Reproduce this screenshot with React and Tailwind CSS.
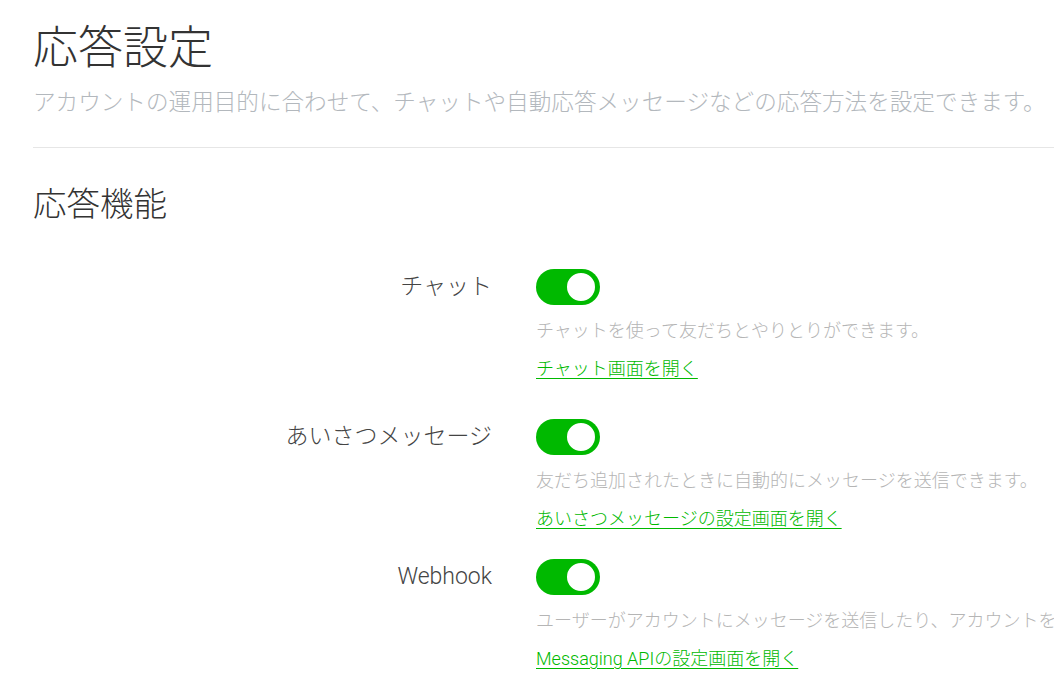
const rows = [
  {
    label: "チャット",
    desc: "チャットを使って友だちとやりとりができます。",
    link: "チャット画面を開く",
    gap: "mt-[44px]",
  },
  {
    label: "あいさつメッセージ",
    desc: "友だち追加されたときに自動的にメッセージを送信できます。",
    link: "あいさつメッセージの設定画面を開く",
    gap: "mt-[38px]",
  },
  {
    label: "Webhook",
    desc: "ユーザーがアカウントにメッセージを送信したり、アカウントを友だち追加したりしたときに、Webhook URLにイベントが送信されます。",
    link: "Messaging APIの設定画面を開く",
    gap: "mt-[28px]",
  },
];

const Toggle = () => (
  <button
    type="button"
    className="relative flex h-[36px] w-[64px] shrink-0 items-center justify-end rounded-full bg-[#00b900] pr-[3px]"
  >
    <span className="block h-[32px] w-[32px] rounded-full border-2 border-[#00b900] bg-white" />
  </button>
);

const App = () => {
  return (
    <div
      className="h-[679px] w-[1054px] overflow-hidden bg-white"
      style={{ fontFamily: '"Roboto", "Noto Sans CJK JP", sans-serif' }}
    >
      <div className="w-[1400px] pl-[33px]">
        {/* Header */}
        <h1 className="pt-[22px] text-[45px] font-light leading-[54px] text-[#333]">
          応答設定
        </h1>
        <p className="mt-[11px] whitespace-nowrap text-[22.6px] font-light leading-[32px] text-[#b3b8bd]">
          アカウントの運用目的に合わせて、チャットや自動応答メッセージなどの応答方法を設定できます。
        </p>
        <div className="mt-[28px] h-px w-full bg-[#e6e6e6]" />

        {/* Section */}
        <h2 className="mt-[37px] text-[33.5px] font-light leading-[40px] text-[#333]">
          応答機能
        </h2>

        {rows.map((row) => (
          <div key={row.label} className={`${row.gap} flex`}>
            <div className="flex h-[36px] w-[459px] shrink-0 items-center justify-end text-[23px] font-light text-[#444]">
              {row.label}
            </div>
            <div className="ml-[44px] flex flex-col">
              <Toggle />
              <p className="mt-[14px] whitespace-nowrap text-[18px] font-light leading-[24px] text-[#b5b5b5]">
                {row.desc}
              </p>
              <a
                href="#"
                className="mt-[14px] whitespace-nowrap text-[18px] font-light leading-[24px] text-[#00b900] underline underline-offset-[3px]"
              >
                {row.link}
              </a>
            </div>
          </div>
        ))}
      </div>
    </div>
  );
};

export default App;
